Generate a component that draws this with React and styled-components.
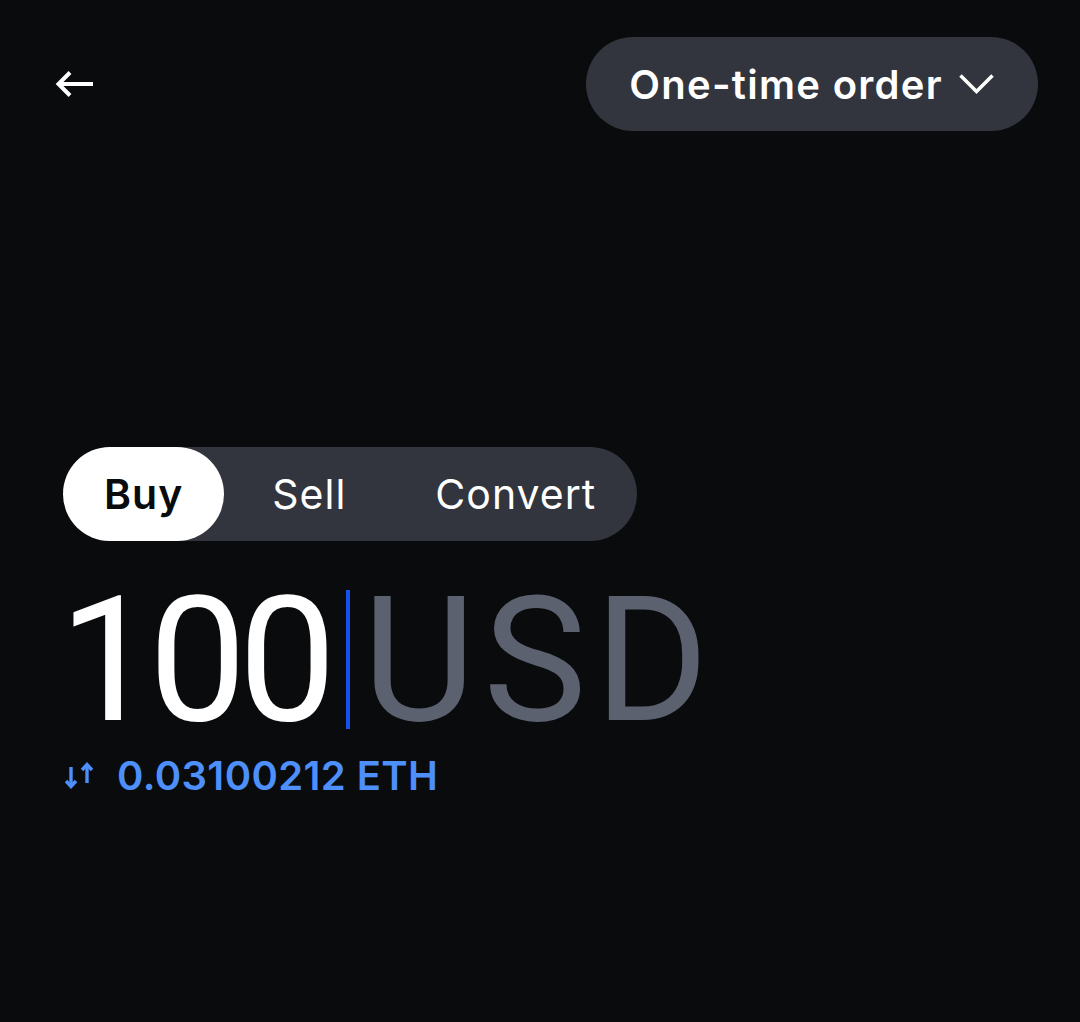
import React from 'react';
import styled, { createGlobalStyle } from 'styled-components';

const GlobalStyle = createGlobalStyle`
  html, body {
    margin: 0;
    padding: 0;
    background: #0a0b0d;
  }
  * { box-sizing: border-box; }
`;

const Page = styled.div`
  min-height: 100vh;
  background: #0a0b0d;
  padding: 37px 42px 0 55px;
  font-family: Inter, "Noto Sans", sans-serif;
  color: #ffffff;
`;

const Header = styled.div`
  display: flex;
  justify-content: space-between;
  align-items: center;
  height: 94px;
`;

const BackButton = styled.button`
  display: flex;
  align-items: center;
  padding: 0;
  border: none;
  background: none;
  color: #ffffff;
  cursor: pointer;
`;

const OrderPill = styled.button`
  display: flex;
  align-items: center;
  gap: 16px;
  height: 94px;
  padding: 0 44px 0 43px;
  border: none;
  border-radius: 47px;
  background: #32353d;
  color: #ffffff;
  font-family: Inter, sans-serif;
  font-size: 40px;
  font-weight: 600;
  letter-spacing: 1.3px;
  cursor: pointer;
`;

const Main = styled.div`
  padding-left: 8px;
  margin-top: 316px;
`;

const Segmented = styled.div`
  display: inline-flex;
  gap: 7px;
  height: 94px;
  border-radius: 47px;
  background: #32353d;
`;

const Segment = styled.div`
  display: flex;
  align-items: center;
  padding: 0 41px;
  border-radius: 47px;
  font-size: 41px;
  letter-spacing: 1px;
  font-weight: ${p => (p.$active ? 600 : 400)};
  color: ${p => (p.$active ? '#0a0b0d' : '#ffffff')};
  background: ${p => (p.$active ? '#ffffff' : 'transparent')};
`;

const AmountRow = styled.div`
  display: flex;
  align-items: center;
  margin-top: 33px;
  font-family: Roboto, "Liberation Sans", sans-serif;
  font-size: 174px;
  font-weight: 400;
  line-height: 1;
`;

const Value = styled.span`
  margin-left: -4px;
  color: #ffffff;
  letter-spacing: -8px;
`;

const Caret = styled.span`
  display: block;
  width: 4px;
  height: 139px;
  margin: -4px 12px 0 18px;
  background: #1652f0;
`;

const Currency = styled.span`
  color: #5b616e;
  letter-spacing: 8px;
`;

const Conversion = styled.div`
  display: flex;
  align-items: center;
  gap: 24px;
  margin-top: 3px;
  padding-left: 2px;
  color: #4d8ffb;
  font-size: 40px;
  font-weight: 600;
  letter-spacing: 0.4px;
`;

const ArrowLeftIcon = () => (
  <svg width="38" height="26" viewBox="0 0 38 26" fill="none" stroke="currentColor" strokeWidth="4">
    <path d="M38 13H4" />
    <path d="M15 1.5L3.5 13L15 24.5" />
  </svg>
);

const ChevronDown = () => (
  <svg width="35" height="20" viewBox="0 0 35 20" fill="none" stroke="currentColor" strokeWidth="3.5">
    <path d="M1.5 1.5L17.5 17.5L33.5 1.5" />
  </svg>
);

const SwapIcon = () => (
  <svg width="28" height="27" viewBox="0 0 28 27" fill="none" stroke="currentColor" strokeWidth="3.4">
    <path d="M6 5V24" />
    <path d="M1 19L6 24.5L11 19" />
    <path d="M22 21V2.5" />
    <path d="M17 8L22 2.5L27 8" />
  </svg>
);

const tabs = [
  { label: 'Buy', active: true },
  { label: 'Sell' },
  { label: 'Convert' }
];

const App = () => (
  <Page>
    <GlobalStyle />
    <Header>
      <BackButton aria-label="Back">
        <ArrowLeftIcon />
      </BackButton>
      <OrderPill>
        One-time order
        <ChevronDown />
      </OrderPill>
    </Header>
    <Main>
      <Segmented>
        {tabs.map(t => (
          <Segment key={t.label} $active={t.active}>{t.label}</Segment>
        ))}
      </Segmented>
      <AmountRow>
        <Value>100</Value>
        <Caret />
        <Currency>USD</Currency>
      </AmountRow>
      <Conversion>
        <SwapIcon />
        <span>0.03100212 ETH</span>
      </Conversion>
    </Main>
  </Page>
);

export default App;
